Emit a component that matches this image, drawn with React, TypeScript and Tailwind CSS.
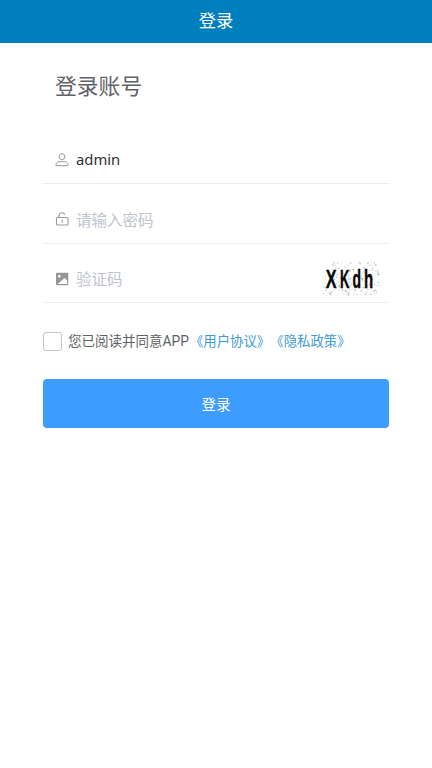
import type { ReactNode } from 'react';

const sans = "font-['Noto_Sans','Noto_Sans_CJK_SC',sans-serif]";

function UserIcon() {
  return (
    <svg width="14" height="14" viewBox="0 0 14 14" fill="none" stroke="#999" strokeWidth="1">
      <circle cx="7" cy="3.7" r="2.9" />
      <path d="M1 12.7v-.9c0-2 1.500-3.100 3.300-3.100h5.400c1.800 0 3.300 1.100 3.300 3.100v.9z" strokeLinejoin="round" />
    </svg>
  );
}

function LockIcon() {
  return (
    <svg width="14" height="14" viewBox="0 0 14 14" fill="none" stroke="#999" strokeWidth="1.100" className="relative -top-px">
      <rect x="1.500" y="5.500" width="11.500" height="7.500" rx="1" />
      <path d="M4 5.500V3.800C4 2 5.200.8 7 .8c1.500 0 2.500.7 2.900 1.900M7.200 7.800v2.700" />
    </svg>
  );
}

function ImageIcon() {
  return (
    <svg width="14" height="14" viewBox="0 0 14 14">
      <rect x="1" y=".8" width="12.300" height="12.400" rx="1" fill="#969696" />
      <circle cx="4.300" cy="4.200" r="1.300" fill="#fff" />
      <path d="M2.600 12 9.600 6 12.200 8.600V12z" fill="#fff" />
    </svg>
  );
}

// Speckles scattered over the verification image
const specks = Array.from({ length: 190 }, (_, i) => {
  const a = Math.abs(Math.sin(i * 12.9898 + 1) * 43758.5453);
  const b = Math.abs(Math.sin(i * 78.233 + 2) * 24634.6345);
  return { x: (a % 1) * 57, y: (b % 1) * 33, s: 0.8 + (i % 3) * 0.25, o: 0.14 + (i % 4) * 0.09 };
});

const letters = [
  { c: 'X', t: 'translate(3.700 25.500) scale(.65 1)' },
  { c: 'K', t: 'translate(18.100 25.500) scale(.52 1)' },
  { c: 'd', t: 'translate(30.400 25.500) scale(.56 1)' },
  { c: 'h', t: 'translate(42 25.500) scale(.6 1)' },
];

function Captcha() {
  return (
    <svg width="58" height="34" viewBox="0 0 58 34" className="mr-[9px]">
      {specks.map((p, i) => (
        <rect key={i} x={p.x} y={p.y} width={p.s} height={p.s} fill="#333" opacity={p.o} />
      ))}
      {letters.map((l) => (
        <text
          key={l.c}
          transform={l.t}
          fill="#080808"
          stroke="#080808"
          strokeWidth=".4"
          className="font-['Liberation_Sans',sans-serif] text-[25px] font-bold"
        >
          {l.c}
        </text>
      ))}
    </svg>
  );
}

function Field({ icon, children, extra, className }: { icon: ReactNode; children: ReactNode; extra?: ReactNode; className: string }) {
  return (
    <div className={`flex items-center border-b border-[#ebebeb] pl-3 ${className}`}>
      {icon}
      <div className="ml-[7px] flex-1">{children}</div>
      {extra}
    </div>
  );
}

export default function App() {
  return (
    <div className={`min-h-screen w-full bg-white ${sans}`}>
      <header className="flex h-[43px] items-center justify-center bg-[#007fbe] pb-[2px] text-[17.300px] text-white">
        登录
      </header>
      <main className="px-[43px]">
        <h1 className="mt-[27px] h-8 pl-3 text-[21.800px] leading-8 text-[#606266]">登录账号</h1>
        <Field icon={<UserIcon />} className="mt-[34px] h-12">
          <div className="pb-px text-[14.800px] leading-6 text-[#303133]">admin</div>
        </Field>
        <Field icon={<LockIcon />} className="mt-3 h-12">
          <div className="pt-[2px] text-[15.500px] text-[#c0c4cc]">请输入密码</div>
        </Field>
        <Field icon={<ImageIcon />} extra={<Captcha />} className="mt-[11px] h-12">
          <div className="pt-[2px] text-[15.500px] text-[#c0c4cc]">验证码</div>
        </Field>
        <div className="mt-[28px] flex h-5 items-center whitespace-nowrap text-[13.500px] text-[#606266]">
          <span className="mr-[6px] h-[19px] w-[19px] shrink-0 rounded-[3px] border border-[#c4c4c4]" />
          <span>您已阅读并同意</span>
          <span className="font-['Roboto',sans-serif] text-[13.800px]">APP</span>
          <span className="ml-px text-[13.400px] text-[#409bd2]">《用户协议》</span>
          <span className="text-[13.400px] text-[#409bd2]">《隐私政策》</span>
        </div>
        <button className="mt-[28px] flex h-[49px] w-full items-center justify-center rounded-[4px] bg-[#3c9cff] pt-[2px] text-[14.500px] text-white">
          登录
        </button>
      </main>
    </div>
  );
}
